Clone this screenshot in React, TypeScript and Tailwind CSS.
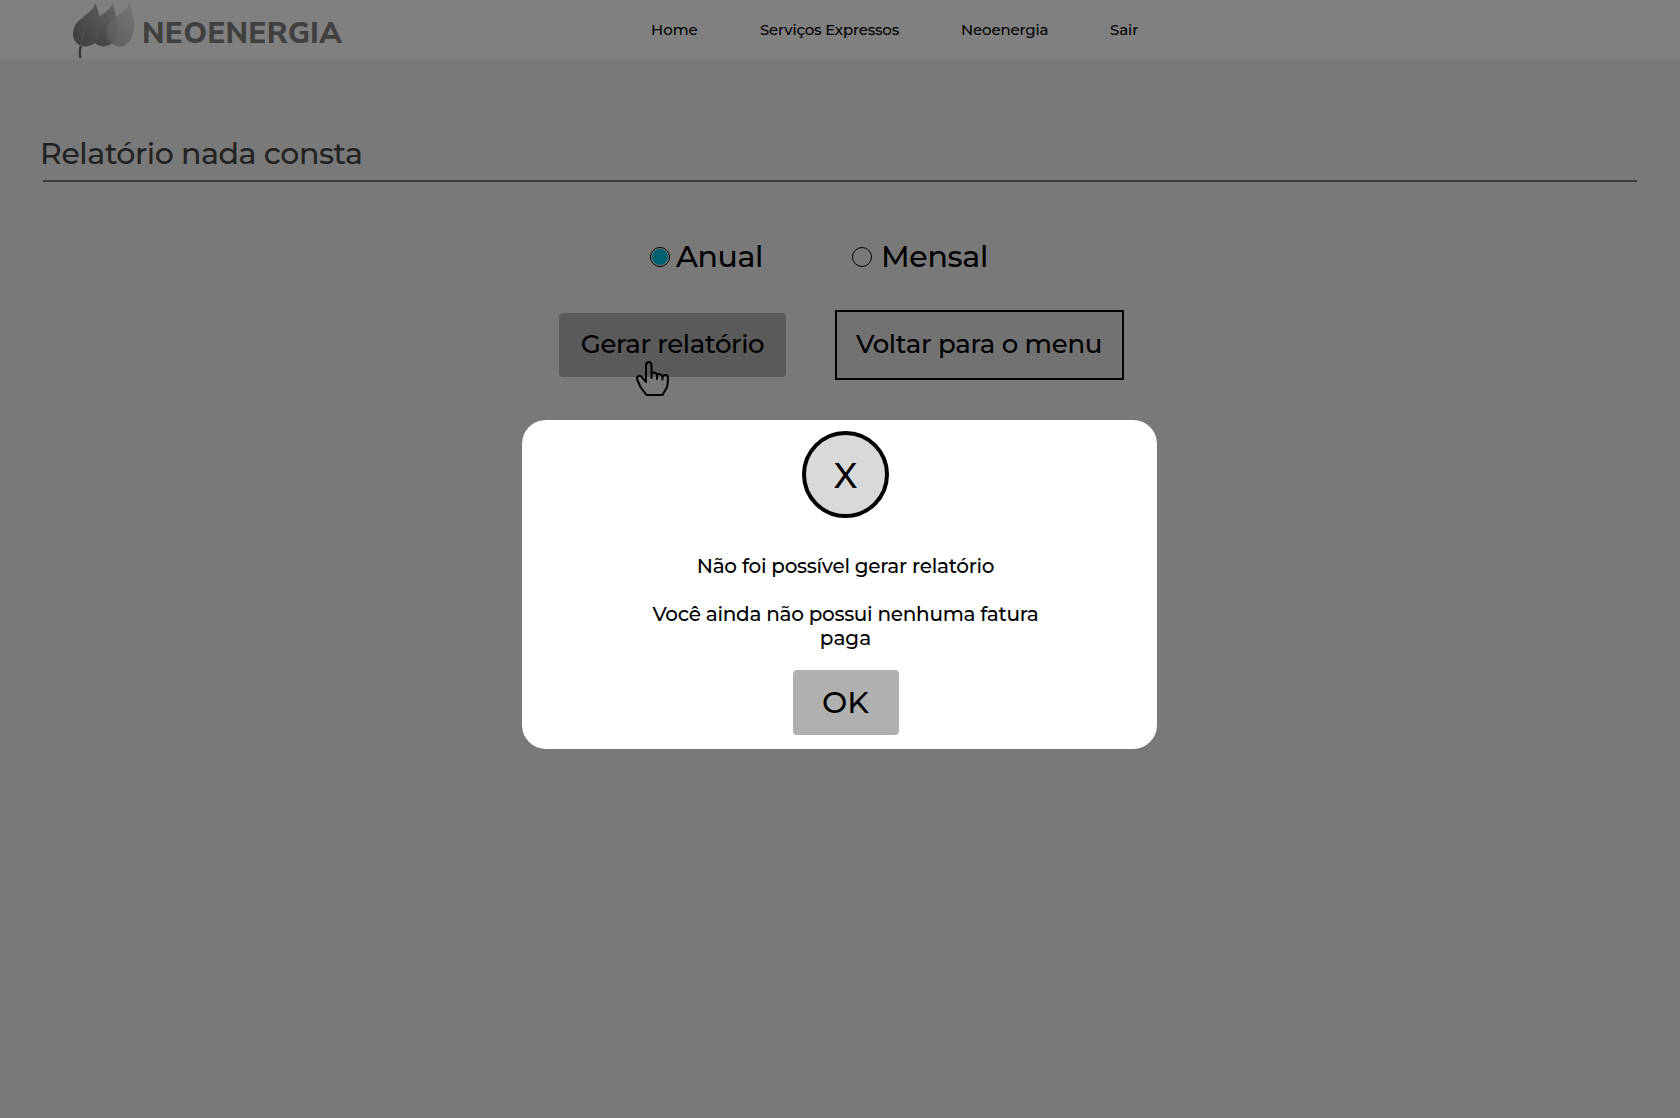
function Logo() {
  return (
    <div className="flex h-[60px] w-[320px] shrink-0">
      <svg className="h-[60px] w-[69px] shrink-0" viewBox="68 0 69 60" fill="none">
        <defs>
          <linearGradient id="leafDark" x1="0" y1="1" x2="1" y2="0">
            <stop offset="0" stopColor="#3c3c3c" />
            <stop offset="1" stopColor="#5a5a5a" />
          </linearGradient>
          <linearGradient id="leafMid" x1="0" y1="1" x2="0.6" y2="0">
            <stop offset="0" stopColor="#3d3d3d" />
            <stop offset="1" stopColor="#626262" />
          </linearGradient>
          <linearGradient id="leafLight" x1="0" y1="1" x2="0.6" y2="0">
            <stop offset="0" stopColor="#575757" />
            <stop offset="1" stopColor="#717171" />
          </linearGradient>
        </defs>
        <path d="M112.500 3C110 14 90 17 90 33C90 41 97 46.500 104 46.500C112 46.500 117.500 38 117.500 27C117.500 17 114 9 112.500 3Z" fill="url(#leafMid)" />
        <path d="M129.500 2.500C127 14 106.500 17 106.500 32.500C106.500 41 113 46.500 120 46.500C128.500 46.500 134 37 134 25C134 16 131 9 129.500 2.500Z" fill="url(#leafLight)" fillOpacity="0.88" />
        <path d="M95.500 2.500C93 15 73 18 73 34C73 41 78 46 85 46.500C95 46.500 100.800 38 100.800 27C100.800 17 97.500 9 95.500 2.500Z" fill="url(#leafDark)" />
        <path d="M81 46C81.500 37 85 27 91 18M82.500 36L77.500 28M85 29L82 23" stroke="#5c5c5c" strokeWidth="0.700" />
        <path d="M79.500 45.500L82 46C80.800 50 80.600 54 81.600 58H79.200C78.400 54 78.600 50 79.500 45.500Z" fill="#373737" />
      </svg>
      <span className="mt-[14px] ml-[5px] font-['Nunito_Sans','Open_Sans',sans-serif] text-[30px] leading-10 font-extrabold tracking-[0.2px] text-[#404040]">NEOENERGIA</span>
    </div>
  );
}

function PointerHand() {
  return (
    <svg className="absolute top-[47px] left-[76px] h-[38px] w-[36px]" viewBox="635 360 36 38" fill="none" stroke="#000" strokeWidth="2" strokeLinecap="round" strokeLinejoin="round">
      <path d="M646 382V365.500C646 360.800 651.500 360.800 651.500 365.500V378M646 382L641.500 376.800C639.500 374.600 636 376.600 637.200 379.500L640.500 387L646.500 395H662.500L667 387C668 383 668 380 668 377.500C667.500 374.500 663.500 374 662.500 377V379.500M651.500 373.500C653.500 371.800 656.500 372.500 657 375V379M657 374.800C659.500 373.200 662.500 374.500 662.500 377" />
    </svg>
  );
}

export default function App() {
  return (
    <div className="relative h-[1118px] w-[1680px] overflow-hidden bg-[#797979] font-['Montserrat','Inter',sans-serif] font-medium text-black">
      <header className="flex h-[60px] bg-[#808080] pl-[68px]">
        <Logo />
        <nav className="ml-[263px] flex pt-[18px] text-[15px] leading-6 whitespace-nowrap">
          <a className="w-[109px]">Home</a>
          <a className="w-[201px] tracking-[-0.2px]">Serviços Expressos</a>
          <a className="w-[149px] tracking-[-0.16px]">Neoenergia</a>
          <a className="tracking-[-0.1px]">Sair</a>
        </nav>
      </header>

      <main>
        <div className="ml-10 pt-[74px]">
          <h1 className="h-[46px] text-[30px] leading-10 tracking-[-0.4px] text-[#222]">Relatório nada consta</h1>
        </div>
        <div className="mx-[43px] h-[2px] bg-[#3d3d3d]" />

        <div className="mt-[55px] flex h-10 pl-[650px] text-[30px] leading-10">
          <label className="flex w-[202px] items-center">
            <span className="flex size-5 items-center justify-center rounded-full border border-black">
              <span className="size-4 rounded-full bg-[#006270]" />
            </span>
            <span className="ml-[6px] tracking-[-0.4px]">Anual</span>
          </label>
          <label className="flex items-center">
            <span className="size-5 rounded-full border border-black" />
            <span className="ml-[9px] tracking-[-0.3px]">Mensal</span>
          </label>
        </div>

        <div className="mt-[33px] flex items-center pl-[559px] text-[26px] tracking-[-0.3px] whitespace-nowrap">
          <div className="relative">
            <button className="block h-16 w-[227px] rounded bg-[#5a5a5a] pb-[2px] tracking-[-0.36px]">Gerar relatório</button>
            <PointerHand />
          </div>
          <button className="ml-[49px] h-[70px] w-[289px] border-2 border-black bg-[#727272] pr-px pb-[2px]">Voltar para o menu</button>
        </div>
      </main>

      <section className="absolute top-[420px] left-[522px] flex h-[329px] w-[635px] flex-col items-center rounded-3xl bg-white pl-[12px] text-[20px] leading-6">
        <div className="mt-[11px] flex size-[87px] items-center justify-center rounded-full border-4 border-black bg-[#d9d9d9] pt-[2px] text-[35px]">X</div>
        <p className="mt-[36px] tracking-[-0.28px]">Não foi possível gerar relatório</p>
        <p className="mt-6 text-center tracking-[-0.29px]">
          Você ainda não possui nenhuma fatura
          <br />
          <span className="tracking-normal">paga</span>
        </p>
        <button className="mt-5 h-[65px] w-[106px] rounded bg-[#b0b0b0] text-[30px]">OK</button>
      </section>
    </div>
  );
}
